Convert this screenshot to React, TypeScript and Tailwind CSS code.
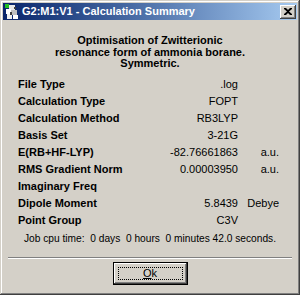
import React from "react";

const rows: { label: string; value?: string; unit?: string }[] = [
  { label: "File Type", value: ".log" },
  { label: "Calculation Type", value: "FOPT" },
  { label: "Calculation Method", value: "RB3LYP" },
  { label: "Basis Set", value: "3-21G" },
  { label: "E(RB+HF-LYP)", value: "-82.76661863", unit: "a.u." },
  { label: "RMS Gradient Norm", value: "0.00003950", unit: "a.u." },
  { label: "Imaginary Freq" },
  { label: "Dipole Moment", value: "5.8439", unit: "Debye" },
  { label: "Point Group", value: "C3V" },
];

const AppIcon = () => (
  <svg width="14" height="15" viewBox="0 0 14 15">
    <rect x="0" y="0" width="4" height="4" fill="#22c022" />
    <rect x="4" y="1" width="6" height="5" fill="#e8e8e8" />
    <rect x="1" y="5" width="5" height="5" fill="#ffffff" />
    <rect x="6" y="6" width="6" height="5" fill="#c0c0c0" />
    <rect x="2" y="10" width="5" height="5" fill="#f0f0f0" />
    <rect x="8" y="11" width="5" height="4" fill="#ffffff" />
    <rect x="5" y="8" width="2" height="3" fill="#404040" />
    <rect x="9" y="3" width="2" height="2" fill="#404040" />
  </svg>
);

export default function App() {
  return (
    <div
      className="w-[300px] h-[295px] bg-[#d4d0c8] p-[3px] flex flex-col text-black shadow-[inset_-1px_-1px_#404040,inset_1px_1px_#d4d0c8,inset_-2px_-2px_#808080,inset_2px_2px_#ffffff]"
      style={{ fontFamily: '"Liberation Sans", Arial, sans-serif' }}
    >
      {/* title bar */}
      <div className="h-[17px] flex items-center bg-gradient-to-r from-[#0a246a] to-[#a6caf0] pl-[2px] pr-[1px]">
        <AppIcon />
        <span className="ml-[3px] text-[11px] font-bold text-white leading-none">
          G2:M1:V1 - Calculation Summary
        </span>
        <button className="ml-auto w-[16px] h-[14px] bg-[#d4d0c8] flex items-center justify-center shadow-[inset_-1px_-1px_#404040,inset_1px_1px_#ffffff,inset_-2px_-2px_#808080]">
          <svg width="8" height="7" viewBox="0 0 8 7">
            <path d="M0 0h2l2 2 2-2h2v1L5 3.5 8 6v1H6L4 5 2 7H0V6l3-2.5L0 1z" fill="#000" />
          </svg>
        </button>
      </div>

      {/* heading */}
      <div className="mt-[15px] text-center text-[11px] font-bold leading-[11.5px]">
        <div>Optimisation of Zwitterionic</div>
        <div>resonance form of ammonia borane.</div>
        <div>Symmetric.</div>
      </div>

      {/* summary rows */}
      <div className="mt-[6px] pl-[15px] pr-[18px]">
        {rows.map((r) => (
          <div key={r.label} className="h-[17px] flex items-center text-[11px]">
            <span className="flex-1 font-bold">{r.label}</span>
            <span className="w-[100px] text-right">{r.value}</span>
            <span className="w-[41px] text-right">{r.unit}</span>
          </div>
        ))}
      </div>

      <div className="mt-[3px] text-center text-[10.2px] leading-[13px]">
        Job cpu time:&nbsp; 0 days&nbsp; 0 hours&nbsp; 0 minutes 42.0 seconds.
      </div>

      {/* separator */}
      <div className="mx-[5px] mt-[12px] border-t border-[#808080] border-b border-b-white" />

      {/* button */}
      <div className="mt-[3px] flex justify-center">
        <button className="w-[75px] h-[23px] p-[4px] bg-[#d4d0c8] border border-black shadow-[inset_-1px_-1px_#404040,inset_1px_1px_#ffffff,inset_-2px_-2px_#808080]">
          <div className="h-full border border-dotted border-black flex items-center justify-center text-[11px] leading-none">
            <span className="underline">O</span>k
          </div>
        </button>
      </div>
    </div>
  );
}
